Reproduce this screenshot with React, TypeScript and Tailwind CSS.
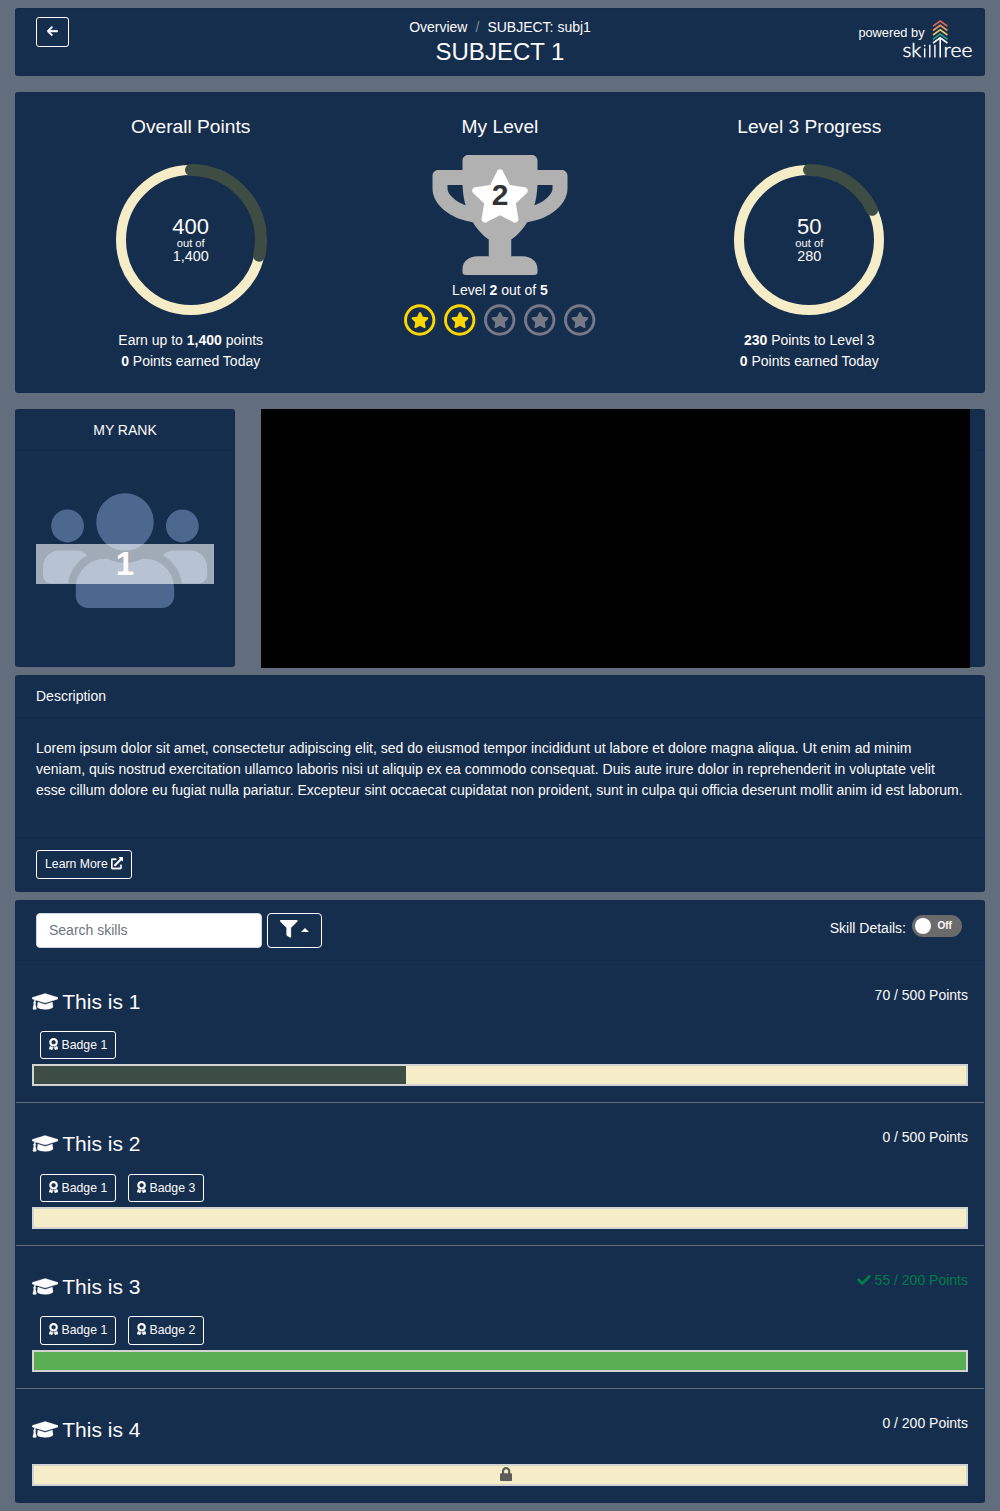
import React from 'react';
import {
  FaTrophy,
  FaStar,
  FaUsers,
  FaExternalLinkAlt,
  FaFilter,
  FaGraduationCap,
  FaAward,
  FaCheck,
  FaLock,
} from 'react-icons/fa';
import { FaArrowLeft } from 'react-icons/fa6';

const card = 'rounded-[3px] border border-[#13294580] bg-[#152e4d]';

function Logo() {
  return (
    <svg className="absolute left-[886px] top-[9px]" width="74" height="42" viewBox="0 0 74 42" fill="none">
      <g strokeWidth="1.6">
        <path d="M31 8.2L38.2 3L45.4 8.2" stroke="#df6b55" />
        <path d="M31 12.5L38.2 7.3L45.4 12.5" stroke="#ef9a5a" />
        <path d="M31 17L38.2 11.8L45.4 17" stroke="#e8c468" />
        <path d="M31 21.3L38.2 16.1L45.4 21.3" stroke="#2a9d8a" />
        <path d="M31 25L38.2 19.8L45.4 25M38.2 20V39.6" stroke="#fff" />
        <path d="M22.7 30.2V39.4M22.7 26.8V28.5M27.8 26.8V39.4M32.9 26.8V39.4" stroke="#fff" strokeWidth="1.4" />
      </g>
      <g fill="#fff" stroke="#fff" strokeWidth="0.4" fontFamily="Lato" fontSize="19" fontWeight="300">
        <text x="0.4" y="39.2" textLength="18.8" lengthAdjust="spacingAndGlyphs">
          sk
        </text>
        <text x="41.6" y="39.2" textLength="28.8" lengthAdjust="spacingAndGlyphs">
          ree
        </text>
      </g>
    </svg>
  );
}

function Ring({ value, total, label, max }: { value: number; total: number; label: string; max: string }) {
  const length = 2 * Math.PI * 70;
  return (
    <div className="relative mt-[22px] grid h-[160px] w-[160px] place-items-center">
      <svg className="absolute inset-0" width="160" height="160" viewBox="0 0 160 160" fill="none">
        <circle cx="80" cy="80" r="70" stroke="#f5edc8" strokeWidth="10" />
        <circle
          cx="80"
          cy="80"
          r="70"
          stroke="#3e4d44"
          strokeWidth="12"
          strokeLinecap="round"
          strokeDasharray={`${(length * value) / total} ${length}`}
          transform="rotate(-90 80 80)"
        />
      </svg>
      <div className="relative text-center">
        <div className="text-[22px] leading-[22px]">{label}</div>
        <div className="text-[11.2px] leading-[11px]">out of</div>
        <div className="text-[14.4px] leading-[15px]">{max}</div>
      </div>
    </div>
  );
}

function LevelStar({ on }: { on: boolean }) {
  return (
    <span className={`relative grid size-8 place-items-center ${on ? 'text-[#ffd700]' : 'text-[#787886]'}`}>
      <svg className="absolute inset-0" width="32" height="32" viewBox="0 0 32 32" fill="none">
        <circle cx="15.7" cy="16" r="14.2" stroke="currentColor" strokeWidth="2.9" />
      </svg>
      <FaStar className="mr-[0.6px] h-4 w-[18px]" />
    </span>
  );
}

type Skill = {
  n: number;
  points: string;
  badges: number[];
  fill: number;
  height: string;
  badgeHeight: string;
  done?: boolean;
  locked?: boolean;
};

const skills: Skill[] = [
  { n: 1, points: '70 / 500 Points', badges: [1], fill: 39.9, height: 'h-[142px]', badgeHeight: 'h-[28px]' },
  { n: 2, points: '0 / 500 Points', badges: [1, 3], fill: 0, height: 'h-[143px]', badgeHeight: 'h-[28px]' },
  { n: 3, points: '55 / 200 Points', badges: [1, 2], fill: 100, height: 'h-[143px]', badgeHeight: 'h-[29px]', done: true },
  { n: 4, points: '0 / 200 Points', badges: [], fill: 0, height: 'h-[113px]', badgeHeight: 'h-[28px]', locked: true },
];

function SkillRow({ skill }: { skill: Skill }) {
  return (
    <div
      className={`flex flex-col px-4 pb-4 ${skill.height} ${skill.locked ? '' : 'border-b border-[#626d7d]'}`}
    >
      <div className="flex items-start justify-between">
        <div className="mt-[28px] flex h-[25px] items-center text-[21px] leading-[25px]">
          <FaGraduationCap className="mb-px mr-[4px] h-[21px] w-[26.25px] stroke-current stroke-[6]" />
          This is {skill.n}
        </div>
        <div className={`mt-[24px] flex items-center gap-1 ${skill.done ? 'text-[#007c49]' : ''}`}>
          {skill.done && <FaCheck size={14} className="mb-[2px]" />}
          {skill.points}
        </div>
      </div>
      <div className="mt-auto">
        <div className="mb-[5px] ml-2 flex gap-3">
          {skill.badges.map((b) => (
            <span
              key={b}
              className={`flex w-[76px] items-start gap-[3.4px] rounded-[3px] border border-white pl-2 pt-[3px] text-[12.25px] leading-[20px] ${skill.badgeHeight}`}
            >
              <FaAward className="mt-[3px] h-[12.25px] w-[9.2px] stroke-current stroke-[10]" />
              Badge {b}
            </span>
          ))}
        </div>
        <div className="relative h-[22px] border-2 border-[#d3d3d3] bg-[#f5edc8]">
          <div
            className={`h-full ${skill.done ? 'bg-[#59ad52]' : 'bg-[#3e4d44]'}`}
            style={{ width: `${skill.fill}%` }}
          />
          {skill.locked && <FaLock className="absolute left-[466px] top-px h-[14px] w-[12.25px] text-[#5d5d5d]" />}
        </div>
      </div>
    </div>
  );
}

export default function App() {
  return (
    <div
      className="h-[1511px] w-[1000px] bg-[#626d7d] px-[15px] pt-2 text-[14px] leading-[21px] text-[#fdfbfb]"
      style={{ fontFamily: '"Liberation Sans", Arial, sans-serif' }}
    >
      <header className={`${card} relative h-[68px] text-center`}>
        <button className="absolute left-5 top-2 grid h-[30px] w-[33px] place-items-center rounded-[3px] border border-white">
          <FaArrowLeft className="mb-px h-[12.25px] w-[11px] stroke-current stroke-[24]" />
        </button>
        <nav className="mt-[8px] flex justify-center gap-2">
          <span>Overview</span>
          <span className="text-[#868e96]">/</span>
          <span>SUBJECT: subj1</span>
        </nav>
        <h1 className="text-[24px] leading-[28px]">SUBJECT 1</h1>
        <span className="absolute left-[842.4px] top-[14px] text-[12.8px] leading-[19px]">powered by</span>
        <Logo />
      </header>

      <section className={`${card} relative mt-4 h-[301px]`}>
        <div className="grid grid-cols-[349.4px_269.2px_349.4px] text-center">
          <div className="flex flex-col items-center pt-[22px]">
            <h2 className="text-[19.2px] leading-[23px]">Overall Points</h2>
            <Ring value={400} total={1400} label="400" max="1,400" />
            <div className="mt-[10px]">
              Earn up to <b>1,400</b> points
            </div>
            <div>
              <b>0</b> Points earned Today
            </div>
          </div>
          <div className="flex flex-col items-center pt-[22px]">
            <h2 className="text-[19.2px] leading-[23px]">My Level</h2>
            <div className="relative mt-[17px] h-[120px] w-[136px]">
              <FaTrophy className="h-[120px] w-[136px] text-[#b1b1b1]" />
              <FaStar className="absolute left-[38px] top-[13px] h-[56px] w-[60px] text-white" />
              <b className="absolute left-0 top-[25px] w-full text-center text-[30px] leading-[30px] text-[#333]">2</b>
            </div>
            <div className="mt-[5px]">
              Level <b>2</b> out of <b>5</b>
            </div>
            <div className="mt-[3px] flex gap-2">
              {[1, 2, 3, 4, 5].map((i) => (
                <LevelStar key={i} on={i < 3} />
              ))}
            </div>
          </div>
          <div className="flex flex-col items-center pt-[22px]">
            <h2 className="text-[19.2px] leading-[23px]">Level 3 Progress</h2>
            <Ring value={50} total={280} label="50" max="280" />
            <div className="mt-[10px]">
              <b>230</b> Points to Level 3
            </div>
            <div>
              <b>0</b> Points earned Today
            </div>
          </div>
        </div>
      </section>

      <div className="mt-4 flex h-[258px] gap-[26px]">
        <section className={`${card} w-[220px]`}>
          <h3 className="h-[41px] border-b border-[#132945] pt-[10px] text-center">MY RANK</h3>
          <div className="relative mx-5 mt-[34px] flex justify-center">
            <FaUsers className="h-[131.2px] w-[164px] text-[#4c688f]" />
            <div className="absolute left-0 top-[59px] h-10 w-full bg-white/60 text-center text-[33px] font-bold leading-[40px]">
              1
            </div>
          </div>
        </section>
        <section className={`${card} relative w-[724px]`}>
          <div className="h-[41px] border-b border-[#132945]" />
          <div className="absolute -left-px -top-px h-[259px] w-[709px] bg-black" />
        </section>
      </div>

      <section className={`${card} mt-2 h-[217px]`}>
        <h3 className="h-[42px] border-b border-[#132945] px-5 pt-[10px]">Description</h3>
        <p className="h-[120px] border-b border-[#132945] px-5 pt-5">
          Lorem ipsum dolor sit amet, consectetur adipiscing elit, sed do eiusmod tempor incididunt ut labore et dolore
          magna aliqua. Ut enim ad minim
          <br />
          veniam, quis nostrud exercitation ullamco laboris nisi ut aliquip ex ea commodo consequat. Duis aute irure dolor
          in reprehenderit in voluptate velit
          <br />
          <span className="whitespace-nowrap">
            esse cillum dolore eu fugiat nulla pariatur. Excepteur sint occaecat cupidatat non proident, sunt in culpa qui
            officia deserunt mollit anim id est laborum.
          </span>
        </p>
        <button className="ml-5 mt-3 flex h-[29px] w-[96px] items-center justify-center gap-[3px] rounded-[3px] border border-white text-[12.25px]">
          Learn More <FaExternalLinkAlt size={12.25} className="mb-[2px] stroke-current stroke-[14]" />
        </button>
      </section>

      <section className={`${card} mt-2 h-[603px]`}>
        <div className="flex h-[60px] items-start border-b border-[#132945] pl-5 pr-[22px] pt-3">
          <input
            className="h-[35px] w-[226px] rounded-[4px] border border-[#ced4da] bg-white px-3 pb-[2px] text-[14px] placeholder:text-[#6c757d]"
            placeholder="Search skills"
          />
          <button className="ml-[5px] flex h-[35px] w-[55px] items-start rounded-[4px] border border-white pl-3 pt-[6px]">
            <FaFilter size={17.5} className="stroke-current stroke-[10]" />
            <span className="ml-[3.5px] mt-[7.5px] border-x-4 border-b-4 border-x-transparent border-b-white" />
          </button>
          <div className="ml-auto mt-[5px]">Skill Details:</div>
          <div className="ml-[6px] mt-[2px] flex h-[22px] w-[50px] items-center rounded-full bg-[#6b6b6b] pl-[3px]">
            <span className="size-4 rounded-full bg-white" />
            <span className="ml-[6.4px] text-[10px] font-bold leading-[20px]">Off</span>
          </div>
        </div>
        {skills.map((s) => (
          <SkillRow key={s.n} skill={s} />
        ))}
      </section>
    </div>
  );
}
